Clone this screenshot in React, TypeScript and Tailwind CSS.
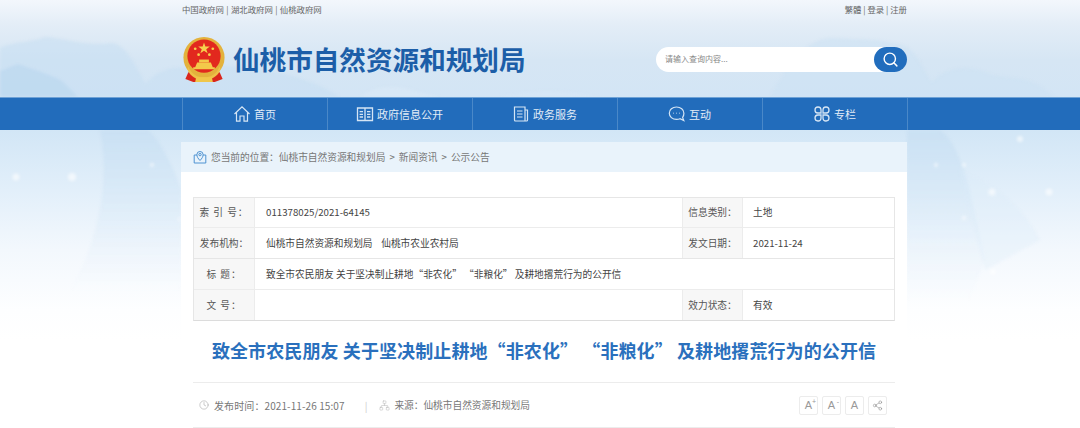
import React from 'react';
import { Clock, Network, Search, Share2 } from 'lucide-react';

const font = 'font-["Noto_Sans_CJK_SC","Liberation_Sans",sans-serif]';

const navItems = [
  { name: '首页', icon: 'home' },
  { name: '政府信息公开', icon: 'book' },
  { name: '政务服务', icon: 'doc' },
  { name: '互动', icon: 'chat' },
  { name: '专栏', icon: 'grid' },
];

const NavIcon = ({ type }: { type: string }) => {
  const cls = 'w-[18px] h-[18px] text-[#d5e5f5]';
  if (type === 'home') {
    return (
      <svg viewBox="0 0 18 18" className={cls} fill="none" stroke="currentColor" strokeWidth="1.2">
        <path d="M1.5 9 9 1.8 16.5 9M3.5 7.5V16.2H7V11H11V16.2H14.5V7.5" />
      </svg>
    );
  }
  if (type === 'book') {
    return (
      <svg viewBox="0 0 18 18" className={cls} fill="none" stroke="currentColor" strokeWidth="1.3">
        <path d="M1.5 3H16.5V15.5H1.5ZM9 3V15.5M3.6 6.6H7M3.6 9.3H7M3.6 12H7M11 6.6H14.4M11 9.3H14.4M11 12H14.4" />
      </svg>
    );
  }
  if (type === 'doc') {
    return (
      <svg viewBox="0 0 18 18" className={cls} fill="none" stroke="currentColor" strokeWidth="1.2">
        <path d="M2.5 2H13V16H3.5A1 1 0 0 1 2.5 15ZM13 5H15.5V15A1 1 0 0 1 14.5 16H13M5 6H10.5M5 9H10.5M5 12H10.5" />
      </svg>
    );
  }
  if (type === 'chat') {
    return (
      <svg viewBox="0 0 18 18" className={cls} fill="none" stroke="currentColor" strokeWidth="1.2">
        <path d="M8.5 2C4.4 2 1.3 4.7 1.3 8.2S4.4 14.4 8.5 14.4C9.8 14.4 11 14.2 12 13.7L15.8 15.6 14.6 12.4C15.5 11.3 15.9 9.8 15.9 8.2 15.9 4.7 12.6 2 8.5 2Z" />
        <path d="M5.4 8.3H5.9M8.4 8.3H8.9M11.4 8.3H11.9" strokeWidth="1.6" />
      </svg>
    );
  }
  return (
    <svg viewBox="0 0 18 18" className={cls} fill="none" stroke="currentColor" strokeWidth="1.3">
      <path d="M8 8H4.8A3 3 0 1 1 8 4.8ZM10 8V4.8A3 3 0 1 1 13.2 8ZM8 10V13.2A3 3 0 1 1 4.8 10ZM10 10H13.2A3 3 0 1 1 10 13.2Z" />
    </svg>
  );
};

// national emblem, simplified
const Emblem = () => (
  <svg viewBox="0 0 44 48" className="w-[44px] h-[47px]">
    <path d="M6 36 3 43 11 46H33L41 43 38 36Z" fill="#d9261c" />
    <circle cx="22" cy="21" r="21" fill="#e3b23c" />
    <circle cx="22" cy="19.5" r="17" fill="#e2281e" />
    <path d="M22 5.5 23.4 9.8H27.9L24.3 12.4 25.7 16.7 22 14 18.3 16.7 19.7 12.4 16.1 9.8H20.6Z" fill="#f6d04d" />
    <circle cx="13" cy="12" r="1.4" fill="#f6d04d" />
    <circle cx="31" cy="12" r="1.4" fill="#f6d04d" />
    <circle cx="16.5" cy="18" r="1.4" fill="#f6d04d" />
    <circle cx="27.5" cy="18" r="1.4" fill="#f6d04d" />
    <path d="M15 26H29L31 31H33V33H11V31H13Z" fill="#f3c94a" />
    <path d="M17 23H27V26H17Z" fill="#f3c94a" />
    <path d="M6 30C9 38 15 41 22 41S35 38 38 30L39 33C36 41 29 44 22 44S8 41 5 33Z" fill="#edc148" />
    <path d="M14 41H30L31 46H13Z" fill="#f0c64a" />
  </svg>
);

const Label = ({ children, left, wide }: { children: React.ReactNode; left?: boolean; wide?: boolean }) => (
  <div className={`shrink-0 bg-[#f7f7f7] flex items-center justify-center text-[9.7px] text-[#555] ${left ? 'w-[61px] border-r border-[#ececec]' : 'w-[61px] border-x border-[#ececec]'} ${wide ? 'tracking-[1px]' : ''}`}>
    {children}
  </div>
);

const Value = ({ children, grow }: { children?: React.ReactNode; grow?: boolean }) => (
  <div className={`flex items-center whitespace-pre text-[9.7px] text-[#444] ${grow ? 'flex-1 pl-[11px]' : 'w-[151px] pl-[10px]'}`}>{children}</div>
);

const FontButton = ({ sup }: { sup?: string }) => (
  <div className="relative w-[19px] h-[19px] border border-[#ececec] rounded-[2px] flex items-center justify-center text-[11px] text-[#999] font-['Liberation_Sans',sans-serif]">
    A
    {sup && <span className="absolute top-[1px] right-[1px] text-[7px] leading-[8px]">{sup}</span>}
  </div>
);

const Dots = () => (
  <>
    <circle cx="16" cy="177" r="3.5" />
    <circle cx="72" cy="177" r="4" />
    <circle cx="152" cy="165" r="2" />
    <circle cx="179" cy="219" r="1.5" />
    <circle cx="936" cy="165" r="2" />
    <circle cx="964" cy="165" r="2" />
    <circle cx="964" cy="218" r="2" />
    <circle cx="992" cy="192" r="3.5" />
    <circle cx="1020" cy="139" r="3" />
    <circle cx="1049" cy="192" r="3.5" />
    <circle cx="993" cy="272" r="3" />
  </>
);

const App = () => {
  return (
    <div className={`relative w-[1080px] h-[428px] overflow-hidden bg-[linear-gradient(180deg,#f3f7fc_0px,#e3edf7_25px,#d6e6f4_60px,#d3e5f5_97px,#d2e6f6_130px,#e2effa_190px,#f3f8fd_250px,#fdfeff_310px,#ffffff_340px)] ${font}`}>
      {/* mountains behind the page */}
      <svg viewBox="0 0 1080 428" className="absolute inset-0 w-[1080px] h-[428px] blur-[1.5px]">
        <defs>
          <linearGradient id="fade" x1="0" y1="0" x2="0" y2="1">
            <stop offset="0" stopColor="#c6def2" stopOpacity=".7" />
            <stop offset="1" stopColor="#dbebf8" stopOpacity="0" />
          </linearGradient>
        </defs>
        <path d="M0 48C15 41 30 43 45 37 65 38 85 47 112 43 128 46 136 68 146 84 155 72 170 66 190 68 230 62 300 70 340 97H0Z" fill="#c6def2" opacity=".55" />
        <path d="M0 71 18 64C35 70 50 74 62 81L78 97H0Z" fill="#b9d6ee" opacity=".6" />
        <path d="M360 97C375 85 395 84 420 92L440 97Z" fill="#dbe9f6" opacity=".6" />
        <path d="M500 97C540 88 560 90 600 97Z" fill="#d7e8f6" opacity=".6" />
        <path d="M770 97C790 60 810 36 835 38 860 40 880 38 905 46 920 55 925 75 932 82 945 68 965 64 985 72 1000 80 1020 74 1040 86L1055 97Z" fill="#cbe2f4" opacity=".5" />
        <path d="M100 130H148C160 140 175 170 181 190V290H70C100 240 110 180 100 130Z" fill="url(#fade)" />
        <path d="M907 130H940C955 140 965 170 972 200L985 260 970 300H907Z" fill="url(#fade)" />
        <path d="M960 170C985 180 1020 200 1040 240L985 270Z" fill="#dcecf9" opacity=".3" />
        <g fill="#ffffff" opacity=".6">
          <Dots />
        </g>
      </svg>

      <div className="relative">
        <div className="w-[725px] ml-[182px] h-[18px] flex justify-between items-center text-[8.4px] text-[#666]">
          <div>中国政府网<span className="mx-[0.5px]"> | </span>湖北政府网<span className="mx-[0.5px]"> | </span>仙桃政府网</div>
          <div>繁體 | 登录 | 注册</div>
        </div>

        <div className="w-[725px] ml-[182px] h-[79px] flex justify-between items-center">
          <div className="flex items-center gap-[7px] pt-[5px]">
            <Emblem />
            <div className="text-[26.6px] font-bold leading-none text-[#1c5ea8] pb-[1px]">仙桃市自然资源和规划局</div>
          </div>
          <div className="flex items-center h-[25px] w-[251px] bg-white rounded-full mt-[3px]">
            <div className="flex-1 pl-[9px] text-[8px] text-[#888]">请输入查询内容...</div>
            <div className="w-[33px] h-[25px] bg-[#216dbd] rounded-full flex items-center justify-center">
              <Search size={17} className="text-white" strokeWidth={2} />
            </div>
          </div>
        </div>

        <div className="h-[33px] bg-[#226cbb] border-t border-[#6ea2d6]">
          <div className="w-[726px] ml-[182px] flex h-full border-l border-[#4a88c8]">
            {navItems.map((item) => (
              <div key={item.name} className="w-[145px] flex items-center justify-center gap-[3px] pr-[1px] border-r border-[#4a88c8] text-[11px] text-[#e3edf7]">
                <NavIcon type={item.icon} />
                <span>{item.name}</span>
              </div>
            ))}
          </div>
        </div>

        <div className="w-[726px] ml-[181px] mt-[12px]">
          <div className="h-[30px] bg-[#e9f3fb] flex items-center pl-[12px] text-[9.7px] text-[#777]">
            <svg viewBox="0 0 14 14" className="w-[14px] h-[14px] mr-[4px]" fill="none" stroke="#4f93d2" strokeWidth="1">
              <path d="M4 5H1.2V13H12.8V5H10" />
              <path d="M7 10.5C5 8.4 3.9 6.8 3.9 4.6A3.1 3.1 0 0 1 10.1 4.6C10.1 6.8 9 8.4 7 10.5Z" />
              <circle cx="7" cy="4.6" r="1.2" />
            </svg>
            <span>您当前的位置：仙桃市自然资源和规划局</span>
            <span className="mx-[4px]">&gt;</span>
            <span>新闻资讯</span>
            <span className="mx-[4px]">&gt;</span>
            <span>公示公告</span>
          </div>

          <div className="bg-white h-[256px] px-[12px] pt-[25px]">
            <div className="border border-[#e6e6e6] border-b-[#dcdcdc]">
              <div className="h-[30px] flex border-b border-[#ececec]">
                <Label left wide>索 引 号：</Label>
                <Value grow>011378025/2021-64145</Value>
                <Label>信息类别：</Label>
                <Value>土地</Value>
              </div>
              <div className="h-[31px] flex border-b border-[#e6e6e6]">
                <Label left>发布机构：</Label>
                <Value grow>仙桃市自然资源和规划局    仙桃市农业农村局</Value>
                <Label>发文日期：</Label>
                <Value>2021-11-24</Value>
              </div>
              <div className="h-[31px] flex border-b border-[#ececec]">
                <Label left wide>标 题：</Label>
                <Value grow>致全市农民朋友 关于坚决制止耕地“非农化” “非粮化” 及耕地撂荒行为的公开信</Value>
              </div>
              <div className="h-[30px] flex">
                <Label left wide>文 号：</Label>
                <Value grow />
                <Label>效力状态：</Label>
                <Value>有效</Value>
              </div>
            </div>

            <div className="h-[61px] flex items-center justify-center pb-[2px] text-[18px] font-bold tracking-[0.1px] text-[#2a70bd] whitespace-pre">
              致全市农民朋友 关于坚决制止耕地“非农化” “非粮化” 及耕地撂荒行为的公开信
            </div>

            <div className="h-[46px] border-y border-[#ececec] flex items-center justify-between pl-[6px] pr-[8px] text-[10px] text-[#777]">
              <div className="flex items-center">
                <Clock size={10} className="mr-[5px] text-[#999]" strokeWidth={1.2} />
                <span className="tracking-[0.1px]">发布时间：2021-11-26 15:07</span>
                <span className="ml-[20px] mr-[12px] text-[#ccc]">|</span>
                <Network size={11} className="mr-[4px] text-[#bbb]" strokeWidth={1.2} />
                <span className="text-[9.7px]">来源：仙桃市自然资源和规划局</span>
              </div>
              <div className="flex gap-[4px] items-center">
                <FontButton sup="+" />
                <FontButton sup="-" />
                <FontButton />
                <div className="w-[19px] h-[19px] border border-[#ececec] rounded-[2px] flex items-center justify-center text-[#888]">
                  <Share2 size={11} strokeWidth={1.2} />
                </div>
              </div>
            </div>
          </div>
        </div>
      </div>
    </div>
  );
};

export default App;
